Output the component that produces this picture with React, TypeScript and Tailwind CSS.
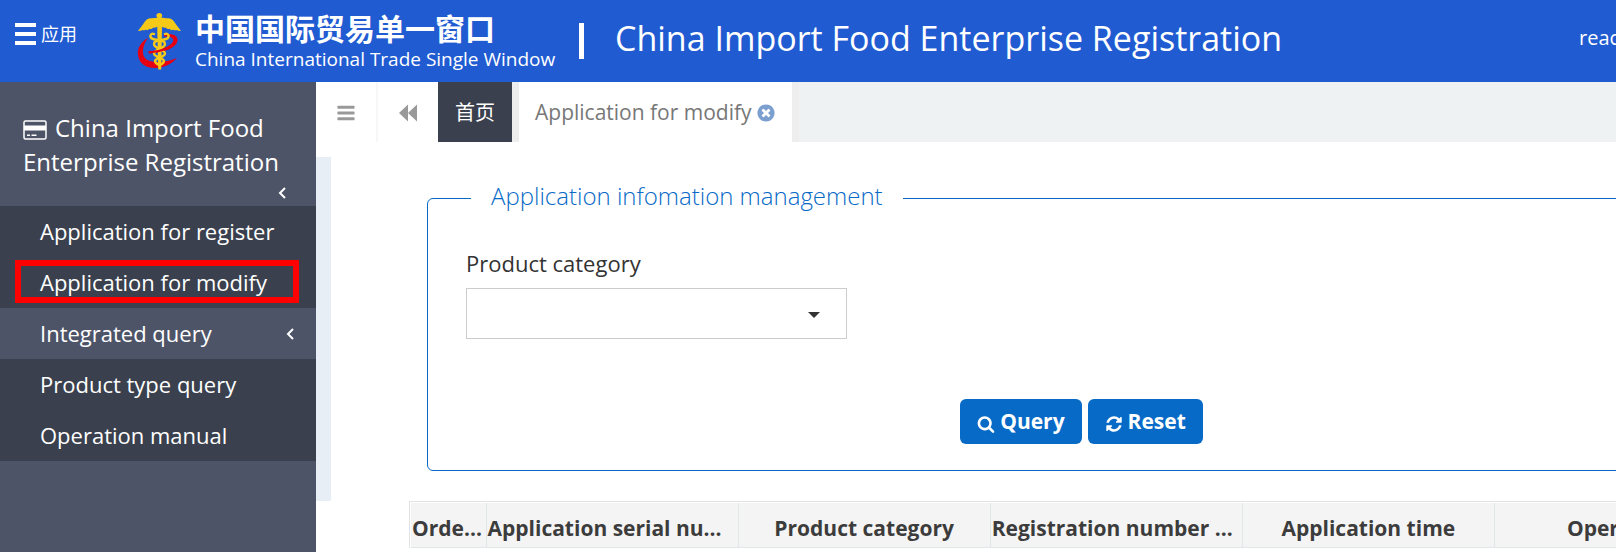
import React from 'react';

function GlyphIcon({ d, className }: { d: string; className: string }) {
  return (
    <svg viewBox="0 0 1792 1792" fill="currentColor" className={className} aria-hidden="true">
      <path d={d} />
    </svg>
  );
}

const SEARCH =
  'M1216 832q0-185-131.5-316.5t-316.5-131.5-316.5 131.5-131.5 316.5 131.5 316.5 316.5 131.5 316.5-131.5 131.5-316.5zm512 832q0 52-38 90t-90 38q-54 0-90-38l-343-342q-179 124-399 124-143 0-273.5-55.5t-225-150-150-225-55.5-273.5 55.5-273.5 150-225 225-150 273.5-55.5 273.5 55.5 225 150 150 225 55.5 273.5q0 220-124 399l343 343q37 37 37 90z';
const REFRESH =
  'M1639 1056q0 5-1 7-64 268-268 434.5t-478 166.5q-146 0-282.5-55t-243.5-157l-129 129q-19 19-45 19t-45-19-19-45v-448q0-26 19-45t45-19h448q26 0 45 19t19 45-19 45l-137 137q71 66 161 102t187 36q134 0 250-65t186-179q11-17 53-117 8-23 30-23h192q13 0 22.5 9.5t9.5 22.5zm25-800v448q0 26-19 45t-45 19h-448q-26 0-45-19t-19-45 19-45l138-138q-148-137-349-137-134 0-250 65t-186 179q-11 17-53 117-8 23-30 23h-199q-13 0-22.5-9.5t-9.5-22.5v-7q65-268 270-434.5t480-166.5q146 0 284 55.5t245 156.5l130-129q19-19 45-19t45 19 19 45z';
const BARS =
  'M1664 1344v128q0 26-19 45t-45 19h-1408q-26 0-45-19t-19-45v-128q0-26 19-45t45-19h1408q26 0 45 19t19 45zm0-512v128q0 26-19 45t-45 19h-1408q-26 0-45-19t-19-45v-128q0-26 19-45t45-19h1408q26 0 45 19t19 45zm0-512v128q0 26-19 45t-45 19h-1408q-26 0-45-19t-19-45v-128q0-26 19-45t45-19h1408q26 0 45 19t19 45z';
const TIMES_CIRCLE =
  'M1277 1122q0-26-19-45l-181-181 181-181q19-19 19-45 0-27-19-46l-90-90q-19-19-46-19-26 0-45 19l-181 181-181-181q-19-19-45-19-27 0-46 19l-90 90q-19 19-19 46 0 26 19 45l181 181-181 181q-19 19-19 45 0 27 19 46l90 90q19 19 46 19 26 0 45-19l181-181 181 181q19 19 45 19 27 0 46-19l90-90q19-19 19-46zm387-226q0 209-103 385.5t-279.5 279.5-385.5 103-385.5-103-279.5-279.5-103-385.5 103-385.5 279.5-279.5 385.5-103 385.5 103 279.5 279.5 103 385.5z';

function Emblem() {
  return (
    <svg viewBox="0 0 45 58" className="h-[58px] w-[45px] shrink-0" aria-hidden="true">
      <path
        fill="#e60012"
        d="M27 22.500C34 21 41.500 23 40.500 29C39.500 35 29 40.500 12 41.500L11 39.500C24 38.500 34 34 36 29.500C37.500 25.500 33 24 27 24.500ZM11 26C4 30 0 36 1 43C2 52 10 56.500 19 56C28 55.500 36 51 40 46C33 49 25 50.500 18 50C9 49.500 5 44.500 6 38C6.500 33 8.500 29.500 11 26Z"
      />
      <path
        fill="#f4c918"
        d="M22.300 1C24 1 25.200 2.100 25.200 3.500C25.200 4.500 24.600 5.200 24.400 5.800C27 5.800 29 6.500 31 6.300C35 6 37 9.500 39.500 13C41 15.300 42.500 17 44 18.800C41.500 19.200 40.500 18.200 39 18C38 19 37 18.200 36 17.600C35 18.800 33.500 17.800 32.500 16.800C31 17.800 29.500 16.500 28.500 15.500C27 16 25.500 15.500 25 14.500L24.200 57.500H21.200L20.200 14.500C19.500 15.500 18 16 16.500 15.500C15.500 16.500 14 17.800 12.500 16.800C11.500 17.800 10 18.800 9 17.600C8 18.200 7 19 6 18C4.500 18.200 3.500 19.200 1 18.800C2.500 17 4 15.300 5.500 13C8 9.500 10 6 14 6.300C16 6.500 18 5.800 20.200 5.800C20 5.200 19.400 4.500 19.400 3.500C19.400 2.100 20.600 1 22.300 1Z"
      />
      <g fill="none" stroke="#f4c918" strokeWidth="2.400" strokeLinecap="round">
        <path d="M17 22C13 20.500 12 26 16 27C22 28.500 28 28 28 32C28 37 17 37 17 41.500C17 45.500 27 45.500 27 49C27 51 25 52 23 53" />
        <path d="M28 22C32 20.500 33 26 29 27C23 28.500 17 28 17 32C17 37 28 37 28 41.500C28 45.500 18 45.500 18 49C18 51 20 52 22 53" />
      </g>
      <path fill="none" stroke="#e60012" strokeWidth="2" d="M12 40.500C19 40 25 38.500 30 36.500" />
    </svg>
  );
}

function CardIcon() {
  return (
    <svg viewBox="0 0 24 20" className="mr-2 inline-block h-5 w-6 align-[-3px]" aria-hidden="true">
      <rect x="1" y="1" width="22" height="18" rx="1.500" fill="none" stroke="currentColor" strokeWidth="1.500" />
      <path d="M1 5.500h22v5H1zM4 14.500h3v1.500H4zM8.500 14.500h5v1.500h-5z" fill="currentColor" />
    </svg>
  );
}

function Chevron() {
  return (
    <svg viewBox="0 0 8 12" className="h-3 w-2" fill="none" stroke="currentColor" strokeWidth="2" aria-hidden="true">
      <path d="M7 1L2 6L7 11" />
    </svg>
  );
}

const menu = [
  { label: 'Application for register' },
  { label: 'Application for modify', marked: true },
  { label: 'Integrated query', group: true },
  { label: 'Product type query' },
  { label: 'Operation manual' },
];

const columns = [
  { label: 'Orde...', style: 'w-[75px] text-left' },
  { label: 'Application serial nu...', style: 'text-left' },
  { label: 'Product category', style: 'text-center' },
  { label: 'Registration number ...', style: 'text-left' },
  { label: 'Application time', style: 'text-center' },
  { label: 'Operation', style: 'text-center' },
];

export default function App() {
  return (
    <div className="flex min-h-screen flex-col overflow-hidden bg-white font-['Open_Sans','Noto_Sans_CJK_SC',sans-serif] text-[#333]">
      <header className="flex h-[82px] items-center overflow-hidden bg-[#205bd2] whitespace-nowrap text-white">
        <button type="button" className="mb-[14px] ml-[15px] flex w-[122px] shrink-0 items-center gap-[5px] text-lg">
          <span className="flex flex-col gap-[5px]" aria-hidden="true">
            <span className="h-1 w-[21px] bg-white" />
            <span className="h-1 w-[21px] bg-white" />
            <span className="h-1 w-[21px] bg-white" />
          </span>
          应用
        </button>
        <Emblem />
        <div className="ml-[13px] w-[384px] shrink-0">
          <div className="text-[30px] leading-9 font-bold">中国国际贸易单一窗口</div>
          <div className="text-[19px] leading-6">China International Trade Single Window</div>
        </div>
        <span className="h-9 w-[5px] shrink-0 bg-white" />
        <h1 className="ml-[31px] flex-1 pb-[6px] text-[34px]">China Import Food Enterprise Registration</h1>
        <a href="#account" className="w-[37px] overflow-hidden pb-[6px] text-xl font-medium">
          reac
        </a>
      </header>

      <div className="flex flex-1">
        <nav className="w-[316px] shrink-0 bg-[#4e5467] text-white">
          <button type="button" className="block h-[124px] w-full pt-[29px] pr-6 pb-[7px] pl-[23px] text-left text-2xl leading-[34px]">
            <CardIcon />
            China Import Food Enterprise Registration
            <span className="mt-2 flex justify-end pr-[6px]">
              <Chevron />
            </span>
          </button>
          <ul>
            {menu.map((m) => (
              <li key={m.label} className={m.group ? 'relative h-[51px]' : 'relative h-[51px] bg-[#3a404d]'}>
                <a href="#menu" className="flex h-full items-center justify-between pr-[22px] pl-10 text-[22px]">
                  {m.label}
                  {m.group && <Chevron />}
                </a>
                {m.marked && (
                  <span className="pointer-events-none absolute top-[3px] right-[17px] bottom-[5px] left-[15px] border-6 border-[#ff0000]" />
                )}
              </li>
            ))}
          </ul>
        </nav>

        <main className="min-w-0 flex-1">
          <div className="flex h-[60px] bg-[#eef2f3]">
            <button type="button" aria-label="Toggle menu" className="flex w-[62px] items-center justify-center border-r-2 border-[#f7f7f7] bg-white pt-[2px] text-[#999]">
              <GlyphIcon d={BARS} className="size-5" />
            </button>
            <button type="button" aria-label="Previous tabs" className="flex w-[60px] items-center justify-center bg-white pt-[2px] text-[#999]">
              <svg viewBox="0 0 18 18" className="size-[18px]" fill="currentColor" aria-hidden="true">
                <path d="M9 0.500V17.500L0 9ZM18 0.500V17.500L9 9Z" />
              </svg>
            </button>
            <button type="button" className="w-[74px] bg-[#3a404d] pt-[2px] text-xl text-white">首页</button>
            <div className="flex items-center gap-1 border-x-7 border-[#eee] bg-white px-4 pt-[2px] text-[21px] text-[#777]">
              <button type="button">Application for modify</button>
              <button type="button" aria-label="Close tab" className="text-[#7b9fcf]">
                <GlyphIcon d={TIMES_CIRCLE} className="size-5" />
              </button>
            </div>
          </div>

          <div className="flex pt-[15px]">
            <div className="h-[344px] w-[15px] shrink-0 bg-[#e7eef5]" />
            <div className="min-w-0 flex-1 pl-[78px]">
              <form className="ml-[18px] -mr-[120px] pt-[22px]">
                <fieldset className="h-[292px] rounded-md border border-[#086ac7] px-[38px] pt-[30px]">
                  <legend className="ml-[5px] px-5 pb-1 text-2xl leading-[34px] font-light text-[#086ac7]">
                    Application infomation management
                  </legend>
                  <label htmlFor="category" className="block text-[22px] leading-8">
                    Product category
                  </label>
                  <div className="relative mt-[9px] w-[381px]">
                    <select id="category" className="block h-[51px] w-full appearance-none border border-[#ccc] bg-white px-3">
                      <option></option>
                    </select>
                    <svg viewBox="0 0 12 6" className="pointer-events-none absolute top-6 right-[27px] h-[6px] w-3" aria-hidden="true">
                      <path d="M0 0H12L6 6Z" fill="#333" />
                    </svg>
                  </div>
                  <div className="mt-[60px] flex justify-center gap-[6px] text-[21px] font-bold text-white">
                    <button type="button" className="flex h-[45px] items-center gap-[5px] rounded-md bg-[#086ac7] px-[17px] pt-px">
                      <GlyphIcon d={SEARCH} className="mt-1 size-[18px]" />
                      Query
                    </button>
                    <button type="reset" className="flex h-[45px] items-center gap-[5px] rounded-md bg-[#086ac7] px-[17px] pt-px">
                      <GlyphIcon d={REFRESH} className="mt-1 size-[18px]" />
                      Reset
                    </button>
                  </div>
                </fieldset>
              </form>

              <div className="mt-[30px] -mr-[131px] border-t border-l border-[#dfe3e6] pt-px pl-px">
                <table className="w-full table-fixed border-collapse text-[21px] text-[#3c3c3c]">
                  <thead>
                    <tr className="h-11 bg-[#f4f4f4]">
                      {columns.map((c) => (
                        <th
                          key={c.label}
                          className={`border-r border-b border-[#e1e6e9] px-px pt-[6px] leading-7 font-bold whitespace-nowrap ${c.style}`}
                        >
                          {c.label}
                        </th>
                      ))}
                    </tr>
                  </thead>
                </table>
              </div>
            </div>
          </div>
        </main>
      </div>
    </div>
  );
}
